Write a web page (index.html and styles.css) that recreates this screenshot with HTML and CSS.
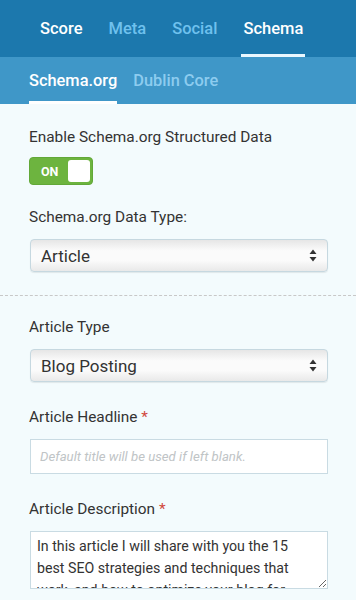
FILE: index.html
```html
<!DOCTYPE html>
<html lang="en">
<head>
<meta charset="utf-8">
<title>Schema</title>
<link rel="stylesheet" href="styles.css">
</head>
<body>
<nav class="topnav">
  <span class="tab tab-active">Score</span>
  <span class="tab">Meta</span>
  <span class="tab">Social</span>
  <span class="tab tab-active tab-current">Schema</span>
</nav>
<nav class="subnav">
  <span class="subtab subtab-current">Schema.org</span>
  <span class="subtab">Dublin Core</span>
</nav>
<main class="content">
  <section class="section section-first">
    <div class="field">
      <div class="label">Enable Schema.org Structured Data</div>
      <div class="toggle"><span class="toggle-text">ON</span><span class="toggle-knob"></span></div>
    </div>
    <div class="field">
      <div class="label">Schema.org Data Type:</div>
      <div class="select"><span>Article</span>
        <svg class="arrows" width="8" height="13" viewBox="0 0 8 13"><path d="M4 0.5 L7.5 5 L0.5 5 Z M4 12.5 L7.5 8 L0.5 8 Z" fill="#333"/></svg>
      </div>
    </div>
  </section>
  <section class="section">
    <div class="field">
      <div class="label">Article Type</div>
      <div class="select"><span>Blog Posting</span>
        <svg class="arrows" width="8" height="13" viewBox="0 0 8 13"><path d="M4 0.5 L7.5 5 L0.5 5 Z M4 12.5 L7.5 8 L0.5 8 Z" fill="#333"/></svg>
      </div>
    </div>
    <div class="field">
      <div class="label">Article Headline <span class="req">*</span></div>
      <input class="input" type="text" placeholder="Default title will be used if left blank.">
    </div>
    <div class="field">
      <div class="label">Article Description <span class="req">*</span></div>
      <textarea class="textarea">In this article I will share with you the 15 best SEO strategies and techniques that work, and how to optimize your blog for search engines.</textarea>
    </div>
  </section>
</main>
</body>
</html>
```
FILE: styles.css
```css
html, body {
  margin: 0;
  padding: 0;
}
body {
  background: #f3fbfd;
  font-family: Roboto, "Liberation Sans", sans-serif;
  color: #333;
  width: 356px;
  height: 600px;
  overflow: hidden;
}
.topnav {
  display: flex;
  height: 57px;
  background: #1c78ad;
  padding-left: 38px;
  gap: 22px;
  box-sizing: border-box;
}
.tab {
  display: flex;
  align-items: center;
  padding: 3px 2px 0;
  font-size: 16.5px;
  font-weight: 500;
  color: #6fc1ee;
  border-bottom: 3px solid transparent;
}
.tab-active {
  color: #fff;
}
.tab-current {
  border-bottom-color: #e9f7ff;
}
.subnav {
  display: flex;
  height: 47px;
  background: #3f97c8;
  padding-left: 29px;
  gap: 16px;
  box-sizing: border-box;
}
.subtab {
  display: flex;
  align-items: center;
  padding-top: 2px;
  font-size: 16.4px;
  font-weight: 500;
  color: #8dccef;
  border-bottom: 3px solid transparent;
}
.subtab-current {
  color: #fff;
  border-bottom-color: #fff;
}
.content {
  padding: 0;
}
.section {
  padding: 22px 28px 0 30px;
}
.section-first {
  padding-top: 24px;
  padding-bottom: 23px;
  border-bottom: 1px dashed #c8c8c8;
}
.field + .field {
  margin-top: 23px;
}
.section:not(.section-first) .field + .field {
  margin-top: 26px;
}
.label {
  font-size: 15.4px;
  line-height: 18px;
  color: #333;
  margin-bottom: 13px;
  margin-left: -1px;
}
.req {
  color: #d0473c;
}
.toggle {
  width: 64px;
  height: 28px;
  box-sizing: border-box;
  background: #6db43f;
  border: 1px solid #62a838;
  border-radius: 4px;
  display: flex;
  align-items: center;
  justify-content: space-between;
  padding: 2px;
  margin-top: -2px;
  margin-left: -1px;
}
.toggle-text {
  color: #fff;
  font-weight: 700;
  font-size: 12.5px;
  padding-left: 9px;
}
.toggle-knob {
  width: 22px;
  height: 22px;
  background: #fff;
  border-radius: 3px;
}
.select {
  height: 33px;
  box-sizing: border-box;
  border: 1px solid #c6d8e0;
  border-radius: 4px;
  background: linear-gradient(#e6e6e6 0%, #fbfbfb 35%, #fbfbfb 65%, #e9e9e9 100%);
  box-shadow: 0 1px 1px rgba(0,0,0,0.08);
  display: flex;
  align-items: center;
  justify-content: space-between;
  padding: 0 10px 0 10px;
  font-size: 17px;
  color: #333;
}
.arrows {
  display: block;
}
.input {
  display: block;
  width: 100%;
  height: 35px;
  box-sizing: border-box;
  border: 1px solid #c9dbe3;
  background: #fff;
  font-family: Roboto, "Liberation Sans", sans-serif;
  font-size: 13.2px;
  padding: 0 9px;
  margin: 0;
  outline: none;
}
.input::placeholder {
  color: #c0c4c6;
  font-style: italic;
}
.textarea {
  display: block;
  width: 100%;
  height: 58px;
  box-sizing: border-box;
  border: 1px solid #c9dbe3;
  background: #fff;
  font-family: Roboto, "Liberation Sans", sans-serif;
  font-size: 14.2px;
  line-height: 22px;
  color: #333;
  padding: 3px 10px 0 6px;
  margin: 0;
  overflow: hidden;
  resize: vertical;
}
```
